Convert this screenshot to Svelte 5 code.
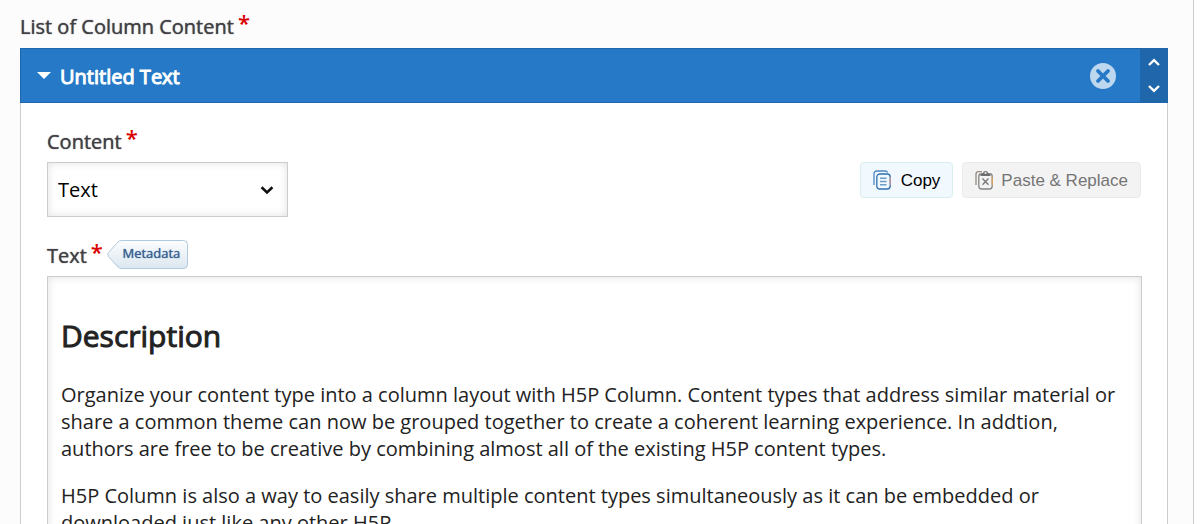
<script lang="ts">
  let expanded = $state(true);
  let content = $state('Text');
</script>

<main class="form">
  <h1 class="label">List of Column Content<span class="required">*</span></h1>
  <section class="item">
    <header class="item-header">
      <button class="toggle" aria-expanded={expanded} onclick={() => (expanded = !expanded)}>
        <svg class="caret" class:closed={!expanded} width="14" height="8" viewBox="0 0 14 8" aria-hidden="true">
          <path d="M0 0H14L7 7Z" fill="currentColor" />
        </svg>
        <span>Untitled Text</span>
      </button>
      <button class="remove" aria-label="Remove item">
        <svg width="26" height="26" viewBox="0 0 26 26" aria-hidden="true">
          <circle cx="13" cy="13" r="13" fill="#bdd7ee" />
          <path d="M8 8L18 18M18 8L8 18" stroke="#2579c6" stroke-width="3.8" stroke-linecap="round" />
        </svg>
      </button>
      <div class="order">
        <button aria-label="Move up">
          <svg width="14" height="9" viewBox="0 0 14 9" aria-hidden="true">
            <path d="M2 7L7 2.2L12 7" fill="none" stroke="#fff" stroke-width="2.4" />
          </svg>
        </button>
        <button aria-label="Move down">
          <svg width="14" height="9" viewBox="0 0 14 9" aria-hidden="true">
            <path d="M2 2L7 6.8L12 2" fill="none" stroke="#fff" stroke-width="2.4" />
          </svg>
        </button>
      </div>
    </header>

    {#if expanded}
      <div class="item-body">
        <label class="label" for="content-type">Content<span class="required">*</span></label>
        <div class="library-row">
          <div class="select-wrap">
            <select id="content-type" bind:value={content}>
              <option>Text</option>
            </select>
            <svg class="chevron" width="14" height="10" viewBox="0 0 14 10" aria-hidden="true">
              <path d="M1.6 2.2L7 7.4L12.4 2.2" fill="none" stroke="#111" stroke-width="2.6" />
            </svg>
          </div>
          <div class="actions">
            <button class="action copy">
              <svg width="18" height="20" viewBox="0 0 18 20" fill="none" aria-hidden="true">
                <path d="M1 15V4Q1 1 4 1H12Q14 1 14.6 2.4" stroke="#4a86be" stroke-width="1.3" />
                <rect x="3.8" y="4" width="13.4" height="15" rx="3" stroke="#2f6fae" stroke-width="1.3" />
                <path d="M7 8.3H13.6M7 11.5H13.6M7 14.7H13.6" stroke="#6f9dca" stroke-width="1.4" />
                <path d="M17.2 7V15" stroke="#c99aa0" stroke-width="1.3" />
              </svg>
              Copy
            </button>
            <button class="action paste" disabled>
              <svg width="18" height="20" viewBox="0 0 18 20" fill="none" aria-hidden="true">
                <path d="M1 15V4Q1 1.6 3.4 1.6H7" stroke="#938a80" stroke-width="1.3" />
                <path d="M6.5 3.6Q3.8 3.6 3.8 6.4V16Q3.8 19 6.6 19H14.4Q17.2 19 17.2 16V6.4Q17.2 3.6 14.6 3.6" stroke="#858585" stroke-width="1.3" />
                <path d="M17.2 7V15" stroke="#d7a45c" stroke-width="1.3" />
                <path d="M5.5 6V4.6Q5.5 3.2 8 3Q8.2 1 10.5 1T13 3Q15.5 3.2 15.5 4.6V6Z" fill="#6e6e6e" />
                <circle cx="10.5" cy="3" r="1" fill="#f3f3f3" />
                <path d="M7.5 8.5L13.5 14.8M13.5 8.5L7.5 14.8" stroke="#777" stroke-width="1.3" />
              </svg>
              Paste &amp; Replace
            </button>
          </div>
        </div>

        <div class="text-label">
          <h2 class="label">Text<span class="required">*</span></h2>
          <button class="metadata">
            <svg width="81" height="29" viewBox="0 0 81 29" aria-hidden="true">
              <defs>
                <linearGradient id="tag" x1="0" y1="0" x2="0" y2="1">
                  <stop offset="0" stop-color="#fcfdfe" />
                  <stop offset="1" stop-color="#dce7f0" />
                </linearGradient>
              </defs>
              <path d="M15 .5H76.5Q80.5 .5 80.5 4.5V24.5Q80.5 28.5 76.5 28.5H15Q12.5 28.5 11 27L1.5 16.5Q0 14.5 1.5 12.5L11 2Q12.5 .5 15 .5Z" fill="url(#tag)" stroke="#b1c9dc" />
            </svg>
            <span>Metadata</span>
          </button>
        </div>

        <article class="editor">
          <h2>Description</h2>
          <p>Organize your content type into a column layout with H5P Column. Content types that address similar material or share a common theme can now be grouped together to create a coherent learning experience. In addtion, authors are free to be creative by combining almost all of the existing H5P content types.</p>
          <p>H5P Column is also a way to easily share multiple content types simultaneously as it can be embedded or downloaded just like any other H5P.</p>
        </article>
      </div>
    {/if}
  </section>
</main>

<style>
  :global(body) {
    background: #fff;
    overflow: hidden;
  }
  .form {
    box-sizing: border-box;
    height: 100vh;
    overflow: hidden;
    margin-right: 10px;
    padding: 12px 25px 0 20px;
    border-right: 1px solid #ccc;
    background: #fcfcfc;
    color: #222;
    font-family: "Open Sans", sans-serif;
    font-size: 20px;
    line-height: 27px;
  }
  button {
    margin: 0;
    padding: 0;
    border: 0;
    background: none;
    font: inherit;
    color: inherit;
    cursor: pointer;
  }
  svg {
    display: block;
  }
  .label {
    display: flex;
    margin: 0;
    height: 28px;
    line-height: 30px;
    font-size: 20px;
    font-weight: 400;
    color: #424045;
    text-shadow: 0 0 1px currentColor;
  }
  .required {
    margin: -5px 0 0 4px;
    color: #da0001;
    font-size: 22px;
    font-weight: 600;
    text-shadow: none;
  }
  .item {
    margin-top: 8px;
    border: 1px solid #ccc;
    border-top: 0;
    background: #fff;
  }
  .item-header {
    display: flex;
    align-items: stretch;
    margin: 0 -1px;
    height: 53px;
    border: 1px solid #2066aa;
    background: #2579c6;
    color: #fff;
  }
  .toggle {
    display: flex;
    flex: 1;
    align-items: center;
    gap: 9px;
    padding-left: 16px;
    padding-top: 2px;
    text-align: left;
    -webkit-text-stroke: 1px;
  }
  .caret {
    margin-top: -2px;
  }
  .closed {
    rotate: -90deg;
  }
  .remove {
    padding: 0 24px;
  }
  .order {
    display: flex;
    flex-direction: column;
    width: 27px;
    background: #2066aa;
  }
  .order button {
    display: grid;
    flex: 1;
    place-items: center;
  }
  .item-body {
    padding: 24px 25px 0 26px;
  }
  .library-row {
    display: flex;
    justify-content: space-between;
    margin-top: 7px;
  }
  .select-wrap {
    position: relative;
    width: 241px;
  }
  select {
    appearance: none;
    box-sizing: border-box;
    width: 100%;
    height: 55px;
    padding: 0 10px;
    border: 1px solid #ccc;
    border-radius: 0;
    background: #fff;
    box-shadow: inset 0 0 8px rgba(0, 0, 0, 0.12);
    color: #000;
    font: inherit;
  }
  .chevron {
    position: absolute;
    right: 14px;
    top: 23px;
    pointer-events: none;
  }
  .actions {
    display: flex;
    align-items: flex-start;
    gap: 9px;
    padding-right: 1px;
  }
  .action {
    display: flex;
    align-items: center;
    gap: 10px;
    box-sizing: border-box;
    height: 36px;
    padding: 0 12px;
    border: 1px solid #d9ecee;
    border-radius: 4px;
    background: #f1f9ff;
    color: #000;
    font-family: "Liberation Sans", Arial, sans-serif;
    font-size: 17px;
  }
  .paste {
    gap: 8px;
    border-color: #eaeaea;
    background: #f3f3f3;
    color: #757575;
  }
  .text-label {
    display: flex;
    align-items: center;
    gap: 4px;
    margin-top: 23px;
  }
  .metadata {
    display: grid;
    align-items: center;
    color: #375f91;
    font-size: 13px;
    line-height: 27px;
    text-shadow: 0 0 1px currentColor;
  }
  .metadata > * {
    grid-area: 1 / 1;
  }
  .metadata span {
    padding: 0 0 2px 8px;
  }
  .editor {
    margin-top: 7px;
    padding: 37px 13px 16px;
    border: 1px solid #ccc;
    background: #fff;
    box-shadow: inset 0 0 8px rgba(0, 0, 0, 0.12);
  }
  .editor h2 {
    margin: 0 0 23px;
    font-size: 30px;
    font-weight: 400;
    line-height: 44px;
    -webkit-text-stroke: 1px;
  }
  .editor p {
    margin: 0 0 20px;
  }
</style>
